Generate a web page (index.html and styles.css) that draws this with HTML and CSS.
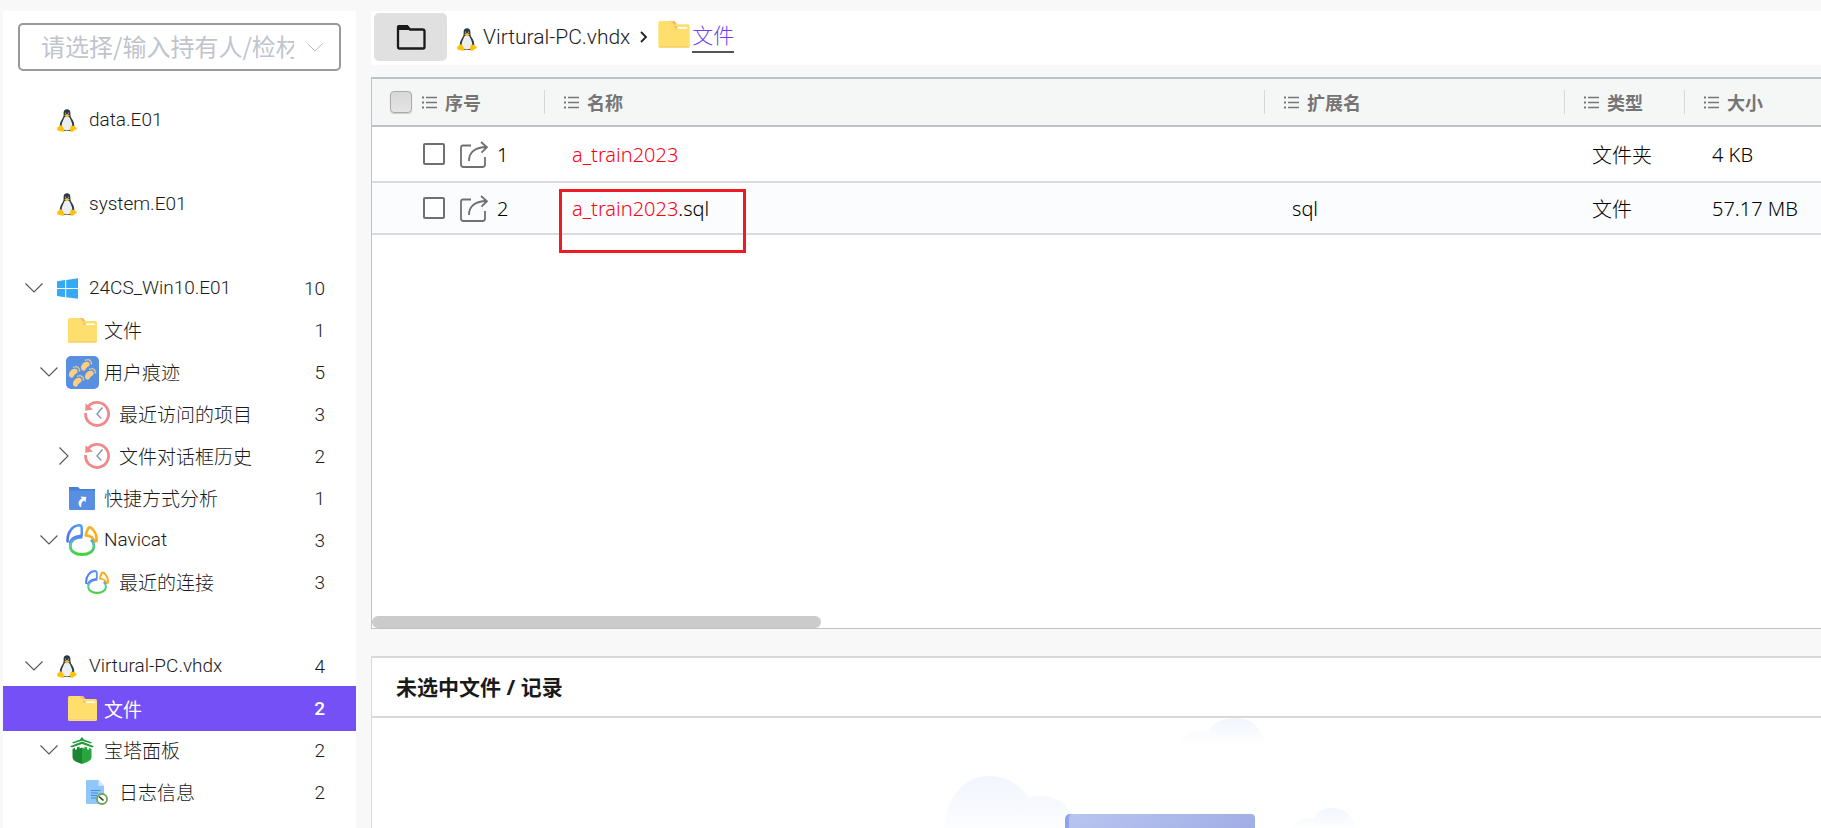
FILE: index.html
```html
<!DOCTYPE html>
<html lang="zh-CN">
<head>
<meta charset="utf-8">
<title>Virtural-PC.vhdx</title>
<link rel="stylesheet" href="styles.css">
</head>
<body>
<svg class="defs" aria-hidden="true">
  <defs>
    <linearGradient id="nav-blue" x1="0" y1="1" x2="1" y2="0"><stop offset="0" stop-color="#4a6cf5"/><stop offset="1" stop-color="#5b9cf8"/></linearGradient>
    <linearGradient id="nav-body" gradientUnits="userSpaceOnUse" x1="0" y1="12" x2="0" y2="31"><stop offset="0" stop-color="#5a7df6"/><stop offset=".45" stop-color="#5cc8a8"/><stop offset="1" stop-color="#43d332"/></linearGradient>
    <symbol id="chev-down" viewBox="0 0 18 10"><path d="M.5.5 9 9 17.5.5" fill="none" stroke="currentColor" stroke-width="1.1"/></symbol>
    <symbol id="chev-right" viewBox="0 0 10 18"><path d="M.5.5 9 9 .5 17.5" fill="none" stroke="currentColor" stroke-width="1.1"/></symbol>
    <symbol id="tux" viewBox="0 0 20 23">
      <path d="M10 .3c-2.200 0-3.500 1.500-3.400 3.800.1 2.400.1 3.600-1.200 5.400C3.800 12 2.600 14.500 2.800 17l3.700 5h7l3.700-5c.3-2.700-.9-5.200-2.500-7.500-1.300-1.800-1.300-2.800-1.300-5.400C13.400 1.700 12.200.3 10 .3z" fill="#2b3a42"/>
      <path d="M10 7.300c-2 0-2.600 1.100-3.500 3.300-1 2.300-2.200 4.200-1.700 7 .5 2.600 2.500 4 5.200 4s4.800-1.400 5.200-4c.5-2.800-.8-4.700-1.700-7-.9-2.200-1.500-3.300-3.500-3.300z" fill="#eceff1"/>
      <circle cx="8.600" cy="4.200" r=".6" fill="#b8c2c8"/><circle cx="11.500" cy="4.200" r=".6" fill="#b8c2c8"/>
      <path d="M7.300 6.200 10 4.900l2.800 1.300L10 8.600z" fill="#fbc02d"/>
      <path d="M.5 18.200c1.400-.4 1.800-1.900 3-2 1.600 0 2.300 2.300 3.600 3.700 1 1.300.3 2.900-1.500 2.900L.6 21.500c-.7-.4-.5-2-.1-3.300zM19.600 18.900c-1.300-.6-1.600-2.300-2.700-2.500-1.100.8-2.400.6-3 .1-.6 1.600-.9 3.400-.8 4.900.2 1.600 2 1.800 3 .9l3.500-2.300c.6-.4.5-.8 0-1.100z" fill="#ffc107"/>
    </symbol>
    <symbol id="windows" viewBox="0 0 21 21"><path d="M0 3.200 8.200 2v8H0zM9.200 1.900 21 .2V10H9.200zM0 11h8.200v8.200L0 17.900zM9.200 11H21v9.800L9.200 19.300z" fill="#36a9f4"/></symbol>
    <symbol id="folder" viewBox="0 0 29 25">
      <path d="M1.500 0H15l2.500 3H27.500Q29 3 29 4.500v19Q29 25 27.500 25h-26Q0 25 0 23.500v-22Q0 0 1.500 0z" fill="#fedf6e"/>
      <path d="M10.500.2H15l2.200 2.700-2.700.5-1-2z" fill="#f9b07b"/><path d="m14.500 5.300 2.200-.6v2.600z" fill="#f5a867"/>
      <rect x="18" y="5.500" width="9" height="1.600" rx=".8" fill="#fff"/><path d="M1 23.700h27" stroke="#f0c878" stroke-width=".8"/>
    </symbol>
    <symbol id="foot" viewBox="0 0 12 12">
      <path d="M2.200 11.400C.5 10.500.6 8 1.700 6.200 3 4 5.800 2.700 7.600 3.700s1.700 3.200.2 4.100c-1.400.8-1.800 1.300-2.500 2.500-.7 1.300-1.900 1.700-3.100 1.100z"/>
      <circle cx="5.400" cy="1.900" r=".8"/><circle cx="7.400" cy="1.500" r=".8"/><circle cx="9.100" cy="2.200" r=".8"/><circle cx="10.200" cy="3.500" r=".8"/><circle cx="10.600" cy="5.100" r=".8"/>
    </symbol>
    <symbol id="feet" viewBox="0 0 33 33">
      <rect width="33" height="33" rx="5" fill="#578fe2"/>
      <g fill="#ffcf7d"><use href="#foot" x="14" y="2" width="13" height="13"/><use href="#foot" x="2" y="9" width="13" height="13"/><use href="#foot" x="18" y="11" width="13" height="13"/><use href="#foot" x="6" y="18" width="13" height="13"/></g>
    </symbol>
    <symbol id="history" viewBox="0 0 26 26">
      <path d="M3.900 6A11.500 11.500 0 1 1 1.600 12" fill="none" stroke="#f08a8a" stroke-width="2.800"/>
      <path d="M1.600 2.200 9 8.600 1.200 9.800z" fill="#f08a8a"/>
      <path d="m18.500 6.500-5.500 6.500 4.300 4.500" fill="none" stroke="#8496a8" stroke-width="1.400"/>
    </symbol>
    <symbol id="shortcut" viewBox="0 0 26 23">
      <path d="M0 0h9l2 2h15v2H0z" fill="#477fd0"/><path d="M0 3.500h26V22q0 1-1 1H1q-1 0-1-1z" fill="#588fe2"/>
      <path d="M11.200 20c-2.900-3.600-1.400-7.200 1.600-8.300l-1.100-2.300 5.700.6-1.100 5.400-1.200-2c-2.500 1.200-3.100 3.500-2.900 6.600z" fill="#fff"/>
    </symbol>
    <symbol id="navicat" viewBox="0 0 32 32">
      <path d="M1.600 17.500C.8 8.500 6.500 1.600 13 1.300c1.800 0 2.600.7 2.700 2.200l.1 6.500c0 1.500-.6 2-2.100 2.100C8.500 12.700 5.500 14.800 4 18.500" fill="none" stroke="url(#nav-blue)" stroke-width="2.500" stroke-linecap="round"/>
      <path d="M19.800 11.500c.5-3 1.300-5.500 2.500-7.300.8-1.100 1.700-1.200 2.700-.4 4 3.300 6 7.700 5.600 13.200M19.800 11.500c4.300.2 7.800 2.200 9 6" fill="none" stroke="#fbad1c" stroke-width="2.600" stroke-linecap="round"/>
      <path d="M16.500 13c-7.500-.2-12.200 3.700-12.200 9.200 0 5 5 8.300 11.800 8.300s11.800-3.300 11.800-8.300c0-2.700-1-4.800-2.900-6.400" fill="none" stroke="url(#nav-body)" stroke-width="2.800"/>
    </symbol>
    <symbol id="pagoda" viewBox="0 0 24 27">
      <path d="M12 0 14 2.500 22 5.500 20.800 6.600 12 3.800 3.200 6.600 2 5.500l8-3zM12 4.600 24 9.300l-1.800 1.200L12 7 1.800 10.500 0 9.300z" fill="#239b3c"/>
      <path d="M2.500 12 5 10.700v2l2-.5v-2l2.500-.8v2l2.500-.8V27C5.800 24.800 2.500 23.500 2.500 20z" fill="#1d8531"/>
      <path d="M21.500 12 19 10.700v2l-2-.5v-2l-2.500-.8v2l-2.500-.8V27c6.200-2.200 9.500-3.500 9.500-7z" fill="#27a63e"/>
    </symbol>
    <symbol id="log" viewBox="0 0 22 25">
      <path d="M1 0h11.500L18 5.700V24H1q-1 0-1-1V1Q0 0 1 0z" fill="#91c6fa"/><path d="M12.500 0 18 5.700h-5.500z" fill="#d3eafe"/>
      <path d="M5 10.500h9.500M5 13h7M5 15.500h6M5 18h5" stroke="#3f8de0" stroke-width="1.200"/>
      <circle cx="16" cy="19" r="5" fill="#fff" stroke="#6aa84f" stroke-width="1.800"/><path d="m13 16.500 4.500 4" stroke="#333" stroke-width="1.600"/>
    </symbol>
    <symbol id="list" viewBox="0 0 15 13"><path d="M4 1.500h11M4 6.500h11M4 11.500h11" stroke="#777" stroke-width="1.300"/><path d="M0 1.500h2M0 6.500h2M0 11.500h2" stroke="#777" stroke-width="2"/></symbol>
    <symbol id="share" viewBox="0 0 28 27"><path d="M11 4.500H3Q1 4.500 1 6.500v17Q1 26 3.500 26h19q2.500 0 2.500-2.500V16M9 20C9 11.500 15 6 27 6M21 1l6 5.200-5.500 5.500" fill="none" stroke="#707070" stroke-width="1.800"/></symbol>
  </defs>
</svg>

<div class="app">
  <aside class="sidebar">
    <div class="picker">
      <input class="picker-input" type="text" aria-label="持有人/检材" placeholder="请选择/输入持有人/检材名称">
      <svg class="picker-arrow" width="16" height="9"><use href="#chev-down"/></svg>
    </div>
    <nav class="tree">
      <div class="group">
        <button class="node"><span class="toggle"></span><span class="icon"><svg width="20" height="23"><use href="#tux"/></svg></span><span class="label">data.E01</span></button>
      </div>
      <div class="group">
        <button class="node"><span class="toggle"></span><span class="icon"><svg width="20" height="23"><use href="#tux"/></svg></span><span class="label">system.E01</span></button>
      </div>
      <div class="group">
        <button class="node"><span class="toggle"><svg width="18" height="10"><use href="#chev-down"/></svg></span><span class="icon"><svg width="21" height="21"><use href="#windows"/></svg></span><span class="label">24CS_Win10.E01</span><span class="count">10</span></button>
        <button class="node level-1"><span class="toggle"></span><span class="icon"><svg width="29" height="25"><use href="#folder"/></svg></span><span class="label">文件</span><span class="count">1</span></button>
        <button class="node level-1"><span class="toggle"><svg width="18" height="10"><use href="#chev-down"/></svg></span><span class="icon"><svg width="33" height="33"><use href="#feet"/></svg></span><span class="label">用户痕迹</span><span class="count">5</span></button>
        <button class="node level-2"><span class="toggle"></span><span class="icon"><svg width="26" height="26"><use href="#history"/></svg></span><span class="label">最近访问的项目</span><span class="count">3</span></button>
        <button class="node level-2"><span class="toggle"><svg width="10" height="18"><use href="#chev-right"/></svg></span><span class="icon"><svg width="26" height="26"><use href="#history"/></svg></span><span class="label">文件对话框历史</span><span class="count">2</span></button>
        <button class="node level-1"><span class="toggle"></span><span class="icon"><svg width="26" height="23"><use href="#shortcut"/></svg></span><span class="label">快捷方式分析</span><span class="count">1</span></button>
        <button class="node level-1"><span class="toggle"><svg width="18" height="10"><use href="#chev-down"/></svg></span><span class="icon"><svg width="32" height="32"><use href="#navicat"/></svg></span><span class="label">Navicat</span><span class="count">3</span></button>
        <button class="node level-2"><span class="toggle"></span><span class="icon"><svg width="24" height="24"><use href="#navicat"/></svg></span><span class="label">最近的连接</span><span class="count">3</span></button>
      </div>
      <div class="group">
        <button class="node"><span class="toggle"><svg width="18" height="10"><use href="#chev-down"/></svg></span><span class="icon"><svg width="20" height="23"><use href="#tux"/></svg></span><span class="label">Virtural-PC.vhdx</span><span class="count">4</span></button>
        <button class="node level-1 selected"><span class="toggle"></span><span class="icon"><svg width="29" height="25"><use href="#folder"/></svg></span><span class="label">文件</span><span class="count">2</span></button>
        <button class="node level-1"><span class="toggle"><svg width="18" height="10"><use href="#chev-down"/></svg></span><span class="icon"><svg width="24" height="27"><use href="#pagoda"/></svg></span><span class="label">宝塔面板</span><span class="count">2</span></button>
        <button class="node level-2"><span class="toggle"></span><span class="icon"><svg width="22" height="25"><use href="#log"/></svg></span><span class="label">日志信息</span><span class="count">2</span></button>
      </div>
    </nav>
  </aside>

  <main class="main">
    <header class="crumbs">
      <button class="up" aria-label="上级目录"><svg width="30" height="25" viewBox="0 0 30 25"><path d="M2 6V2.500Q2 1 3.500 1H11l3 3.500h12.500Q28.500 4.500 28.500 6.500v15.500Q28.500 23.500 27 23.500H3.500Q2 23.500 2 22z" fill="none" stroke="#1a1a1a" stroke-width="2.300"/><path d="M1 1h11l3 4H1z" fill="#1a1a1a"/></svg></button>
      <svg class="crumb-tux" width="20" height="23"><use href="#tux"/></svg>
      <a class="crumb" href="#">Virtural-PC.vhdx</a>
      <svg class="sep" width="8" height="12" viewBox="0 0 8 12"><path d="m1 1 5 5-5 5" fill="none" stroke="#222" stroke-width="1.800"/></svg>
      <svg class="crumb-folder" width="32" height="27"><use href="#folder"/></svg>
      <a class="crumb current" href="#">文件</a>
    </header>

    <section class="files">
      <table class="grid">
        <colgroup><col class="c-index"><col class="c-name"><col class="c-ext"><col class="c-type"><col class="c-size"></colgroup>
        <thead>
          <tr>
            <th><div class="head first"><input class="check-all" type="checkbox" aria-label="全选"><svg width="15" height="13"><use href="#list"/></svg>序号</div></th>
            <th><div class="head"><svg width="15" height="13"><use href="#list"/></svg>名称</div></th>
            <th><div class="head"><svg width="15" height="13"><use href="#list"/></svg>扩展名</div></th>
            <th><div class="head"><svg width="15" height="13"><use href="#list"/></svg>类型</div></th>
            <th><div class="head"><svg width="15" height="13"><use href="#list"/></svg>大小</div></th>
          </tr>
        </thead>
        <tbody>
          <tr>
            <td><div class="index"><input class="check" type="checkbox" aria-label="选择 1"><svg width="28" height="27"><use href="#share"/></svg>1</div></td>
            <td><mark>a_train2023</mark></td><td></td><td>文件夹</td><td>4 KB</td>
          </tr>
          <tr class="alt">
            <td><div class="index"><input class="check" type="checkbox" aria-label="选择 2"><svg width="28" height="27"><use href="#share"/></svg>2</div></td>
            <td class="noted"><mark>a_train2023</mark>.sql<span class="callout"></span></td><td>sql</td><td>文件</td><td>57.17 MB</td>
          </tr>
        </tbody>
      </table>
      <div class="scroll"><div class="thumb"></div></div>
    </section>

    <section class="detail">
      <h2 class="detail-title">未选中文件 / 记录</h2>
      <div class="empty">
        <svg width="420" height="110" viewBox="0 0 420 110">
          <defs>
            <linearGradient id="cloud" x1="0" y1="0" x2="0" y2="1"><stop offset="0" stop-color="#f2f5fe"/><stop offset="1" stop-color="#fff"/></linearGradient>
            <linearGradient id="box" x1="0" y1="0" x2="1" y2=".2"><stop offset="0" stop-color="#b8c5f1"/><stop offset="1" stop-color="#a1afe6"/></linearGradient>
          </defs>
          <path d="M240 26c2-9 14-16 27-12C276 2 285 0 296 0c16 0 27 11 30 26z" fill="url(#cloud)"/>
          <path d="M3 125C1 88 20 58 48 58c18 0 32 8 40 22 22-7 40 2 46 24l6 21z" fill="url(#cloud)"/>
          <path d="M352 112c3-10 12-14 22-11 3-7 9-11 17-11 14 0 23 8 25 22z" fill="url(#cloud)"/>
          <rect x="125" y="96" width="30" height="30" rx="5" fill="#8fa3ec"/>
          <rect x="129" y="96" width="186" height="30" rx="4" fill="url(#box)"/>
        </svg>
      </div>
    </section>
  </main>
</div>
</body>
</html>
```

FILE: styles.css
```css
* { box-sizing: border-box; }

body {
  margin: 0;
  background: #f8f8f8;
  color: #1a1a1a;
  font-family: Roboto, "Noto Sans CJK SC", sans-serif;
  font-size: 19px;
}

svg { display: block; flex: none; }
button { border: 0; font: inherit; color: inherit; cursor: pointer; }
.defs { position: absolute; width: 0; height: 0; }

.app {
  display: grid;
  grid-template-columns: 353px minmax(0, 1fr);
  column-gap: 15px;
  height: 100vh;
  padding: 11px 0 0 3px;
  overflow: hidden;
}

/* Sidebar */
.sidebar { background: #fff; overflow: hidden; }

.picker {
  display: flex;
  align-items: center;
  height: 48px;
  margin: 12px 15px 28px;
  padding: 0 16px 0 21px;
  border: 2px solid #999;
  border-radius: 5px;
  color: #b4b8c0;
}
.picker-input {
  flex: 1;
  min-width: 0;
  margin-right: 13px;
  padding: 0 0 4px;
  border: 0;
  outline: 0;
  background: none;
  font: 24px "Noto Sans CJK SC", sans-serif;
}
.picker-input::placeholder { color: #c0c4cc; }

.group { margin-bottom: 42px; }
.node {
  display: flex;
  align-items: center;
  width: 100%;
  height: 42px;
  padding: 0 31px 0 19px;
  background: none;
  text-align: left;
  font-weight: 300;
}
.level-1 { padding-left: 34px; }
.level-2 { padding-left: 49px; }
.toggle { display: flex; justify-content: center; width: 24px; color: #555; }
.icon { display: flex; justify-content: center; width: 32px; margin: 0 6px 0 5px; }
.label { flex: 1; padding-bottom: 1px; white-space: nowrap; }
.selected {
  height: 45px;
  margin: -1px 0 -2px;
  background: #7550f7;
  color: #fff;
  font-weight: 400;
}
.selected .count { font-weight: 500; }

/* Main column */
.main { display: flex; flex-direction: column; min-width: 0; }

.crumbs {
  display: flex;
  align-items: center;
  height: 54px;
  padding: 2px 3px 4px;
  background: #fff;
}
.up {
  display: grid;
  place-items: center;
  width: 73px;
  height: 48px;
  border-radius: 5px;
  background: #e0e0e0;
}
.crumb-tux { margin: 4px 6px 0 10px; }
.crumb {
  color: #1a1a1a;
  font-size: 21px;
  font-weight: 300;
  line-height: 30px;
  text-decoration: none;
}
.sep { margin: 0 10px; }
.crumb-folder { margin: 0 2px 6px 0; }
.current { border-bottom: 2px solid #555; color: #6f42f5; }

.files {
  flex: 1;
  display: flex;
  flex-direction: column;
  justify-content: space-between;
  margin: 12px 0 27px;
  border: solid #bdc3c7;
  border-width: 2px 0 1px 1px;
  background: #fff;
}
.grid {
  width: 100%;
  table-layout: fixed;
  border-collapse: separate;
  border-spacing: 0;
  color: #000;
  font-family: "Noto Sans", "Noto Sans CJK SC", sans-serif;
  font-size: 20px;
}
.c-index { width: 172px; }
.c-name { width: 720px; }
.c-ext { width: 300px; }
.c-type { width: 120px; }

th {
  height: 48px;
  padding: 0;
  border-bottom: 2px solid #bdc3c7;
  background: #f5f7f7;
}
.head {
  display: flex;
  align-items: center;
  gap: 8px;
  height: 24px;
  padding-left: 19px;
  border-left: 1px solid #d5d8da;
  color: #757575;
  font: bold 18px/24px "Noto Sans CJK SC", sans-serif;
}
.first { padding-left: 18px; border-left: 0; }
.check-all, .check {
  appearance: none;
  flex: none;
  width: 22px;
  height: 22px;
  margin: 0;
  border: 2px solid #707070;
  border-radius: 2px;
  background: #fff;
}
.check-all {
  margin-right: 2px;
  border: 1px solid #aaa;
  border-radius: 4px;
  background: linear-gradient(#d8d8d8, #e4e4e4);
  box-shadow: 0 1px 1px #ccc;
}
td {
  height: 56px;
  padding: 0 0 0 28px;
  border-bottom: 2px solid #d9dbde;
  white-space: nowrap;
  font-weight: 300;
}
.alt td { height: 52px; background: #fbfcfe; }
td:first-child { padding-left: 51px; }
.index { display: flex; align-items: center; gap: 15px; }
.index svg { margin-right: -6px; }
mark { background: none; color: #ff0010; }

.noted { position: relative; }
.callout {
  position: absolute;
  top: 6px;
  left: 15px;
  width: 187px;
  height: 64px;
  border: 3px solid #ed1c24;
}

.scroll { height: 12px; }
.thumb { width: 31%; height: 12px; border-radius: 6px; background: #cbcbcb; }

.detail {
  border: solid #d8d8d8;
  border-width: 2px 0 0 1px;
  background: #fff;
}
.detail-title {
  margin: 0;
  padding: 14px 24px;
  border-bottom: 2px solid #d8d8d8;
  font: bold 21px/30px "Noto Sans", "Noto Sans CJK SC", sans-serif;
}
.empty { display: flex; justify-content: center; padding-left: 106px; }
```
